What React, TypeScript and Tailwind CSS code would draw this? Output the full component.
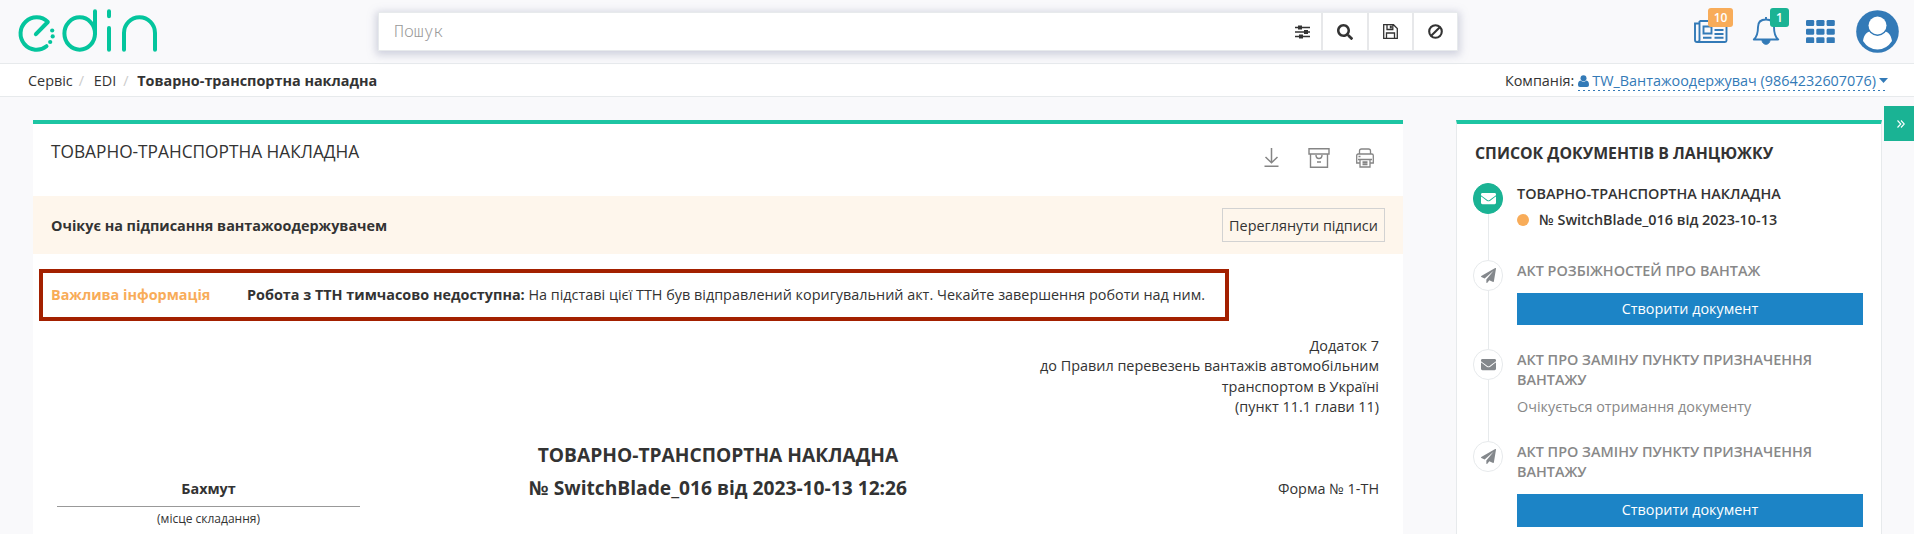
import React from "react";
import { FaEnvelope, FaSearch } from "react-icons/fa";

function Logo() {
  return (
    <svg width="142" height="46" viewBox="0 0 142 46" fill="none" stroke="#04c59d" strokeWidth="4" strokeLinecap="round" strokeLinejoin="round">
      <path d="M18.9 26.2 L30.8 14 A16 16.2 0 1 0 29.5 38.2" />
      <ellipse cx="62.7" cy="25.5" rx="15.3" ry="16.2" />
      <path d="M78 3.3 V25.5 M92 3.3 V8.2 M92 20 V41.7 M107 41.7 V25 A15.5 15.7 0 0 1 138 25 V41.7" />
      <g fill="#04c59d" stroke="none">
        <circle cx="35.2" cy="22.5" r="2.1" />
        <circle cx="35.7" cy="28.4" r="2.1" />
        <circle cx="33.2" cy="34" r="2.1" />
      </g>
    </svg>
  );
}

function SearchBar() {
  return (
    <div className="flex h-[39px] w-[1080px] items-stretch border border-[#e7eaec] bg-white text-[#333] shadow-[0_2px_8px_2px_rgba(130,135,165,0.35)]">
      <div className="flex flex-1 items-center pb-[2px] pl-[15px] font-['Noto_Sans_Mono','Roboto_Mono','Liberation_Mono',monospace] text-[16.5px] font-light text-[#999]">Пошук</div>
      <div className="flex w-[38px] items-center justify-center">
        <svg width="15" height="14" viewBox="0 0 15 14" stroke="#333" strokeWidth="1.3">
          <path d="M0 2.5H15M0 7H15M0 11.5H15" />
          <path d="M3 2.5H7M9 7H13M4 11.5H8" strokeWidth="4" />
        </svg>
      </div>
      <div className="flex w-[46px] items-center justify-center border-l-2 border-[#e7e8ea]"><FaSearch size={16} /></div>
      <div className="flex w-[45px] items-center justify-center border-l-2 border-[#e7e8ea]">
        <svg width="15" height="15" viewBox="0 0 15 15" fill="none" stroke="#333" strokeWidth="1.3">
          <path d="M.7 .7H10.5L14.3 4.5V14.3H.7ZM3.5 14.3V9H11.5V14.3M4 .7V5.5H9.8V.7" />
          <path d="M7.8 1.5V4.5" strokeWidth="2" />
        </svg>
      </div>
      <div className="flex w-[45px] items-center justify-center border-l-2 border-[#e7e8ea]">
        <svg width="15" height="15" viewBox="0 0 15 15" fill="none" stroke="#333" strokeWidth="2.1"><circle cx="7.5" cy="7.5" r="6.3" /><path d="M3.2 11.8L11.8 3.2" /></svg>
      </div>
    </div>
  );
}

function HeaderIcons() {
  return (
    <div className="flex text-[#337ab7]">
      <div className="relative h-[46px] w-[58px]">
        <svg className="mt-[12px]" width="34" height="24" viewBox="0 0 34 24" fill="none" stroke="currentColor" strokeWidth="1.9">
          <path d="M5.5 1H32.5V20.5Q32.5 22 31 22H3Q1 22 1 20V3.5H5.5M5.5 1V20Q5.5 22 3 22" />
          <path d="M9.5 6.5H17.5V13.5H9.5ZM20.5 6H29.5M20.5 10H29.5M20.5 14H29.5M9 17.8H17.5M20.5 17.8H29.5" />
        </svg>
        <span className="absolute left-[14px] top-0 flex h-[19px] w-[25px] items-center justify-center rounded-[3px] bg-[#f8ac59] text-[12px] font-semibold text-white">10</span>
      </div>
      <div className="relative h-[46px] w-[54px]">
        <svg className="mt-[8px]" width="28" height="29" viewBox="0 0 28 29" fill="none" stroke="currentColor" strokeWidth="1.9">
          <path d="M14 1V3M1.8 23.5C5.5 20.5 6 16 6 11Q6 3.5 14 3.5T22 11C22 16 22.5 20.5 26.2 23.5Z" strokeLinejoin="round" />
          <path d="M10 24A4 4.3 0 0 0 18 24Z" fill="currentColor" strokeWidth="1" />
        </svg>
        <span className="absolute left-[18px] top-0 flex h-[19px] w-[19px] items-center justify-center rounded-[3px] bg-[#1ab394] text-[12px] font-semibold text-white">1</span>
      </div>
      <svg className="mt-[12px] mr-[21px]" width="29" height="23" viewBox="0 0 29 23" fill="currentColor">
        {[0, 8.7, 17.2].map((y) => [0, 10.3, 20.6].map((x) => <rect key={`${x}-${y}`} x={x} y={y} width="8.2" height="6" rx="1.3" />))}
      </svg>
      <svg className="mt-[2px]" width="43" height="43" viewBox="0 0 43 43">
        <circle cx="21.5" cy="21.5" r="21.3" fill="currentColor" />
        <path d="M7 31C8 24.5 11 22 14 21.5Q21.5 29 29 21.5C32 22 35 24.5 36 31Q30.5 39.5 21.5 39.5T7 31Z" fill="#fff" />
        <circle cx="21.5" cy="15.5" r="10.4" fill="currentColor" />
        <circle cx="21.5" cy="15.5" r="9" fill="#fff" />
      </svg>
    </div>
  );
}

function DocumentIcons() {
  return (
    <div className="flex items-start text-[#858585]">
      <svg width="15" height="20" viewBox="0 0 15 20" fill="none" stroke="currentColor" strokeWidth="1.5"><path d="M7.5 0V14.5M1.5 9L7.5 14.7L13.5 9M.5 18.3H14.5" /></svg>
      <svg className="ml-[29px]" width="22" height="20" viewBox="0 0 22 20" fill="none" stroke="currentColor" strokeWidth="1.4"><path d="M1 .8H21V6H1ZM2.5 6V19.2H19.5V6M8 7Q8 10.5 11 10.5T14 7M9 14H13" /></svg>
      <svg className="ml-[26px]" width="18" height="20" viewBox="0 0 18 20" fill="none" stroke="currentColor" strokeWidth="1.3">
        <path d="M3.5 6V3Q3.5 1 5.5 1H12.5Q14.5 1 14.5 3V6M4 15H.7V7.5Q.7 6 2.2 6H15.8Q17.3 6 17.3 7.5V15H14M4 11.5H14V19H4ZM2 11.5H16M6.5 13.8H11.5M6.5 15.2H11.5M6.5 16.6H11.5M2.5 8.5H4.5" />
      </svg>
    </div>
  );
}

function PaperPlane() {
  return (
    <svg width="15" height="15" viewBox="0 0 1792 1792" fill="currentColor">
      <path d="M1764 11q33 24 27 64l-256 1536q-5 29-32 45-14 8-31 8-11 0-24-5l-453-185-242 295q-18 23-49 23-13 0-22-4-19-7-30.5-23.5t-11.5-36.5v-349l864-1059-1069 925-395-162q-37-14-40-55-2-40 32-59l1664-960q15-9 32-9 20 0 36 11z" />
    </svg>
  );
}

function CreateButton({ className }: { className: string }) {
  return <button className={`block w-[346px] bg-[#1c84c6] pb-px text-center text-white ${className}`}>Створити документ</button>;
}

function Step({ kind, active, last, className, children }: { kind: "mail" | "send"; active?: boolean; last?: boolean; className: string; children: React.ReactNode }) {
  return (
    <div className={`flex ${className}`}>
      <div className="mr-[14px] flex w-[30px] shrink-0 flex-col items-center">
        <div className={`flex h-[31px] w-[30px] shrink-0 items-center justify-center rounded-full border ${active ? "border-[#1ab394] bg-[#1ab394] text-white" : "border-[#e7eaec] bg-white text-[#84888c]"}`}>
          {kind === "mail" ? <FaEnvelope size={15} /> : <PaperPlane />}
        </div>
        {!last && <div className="ml-px w-px flex-1 bg-[#e7eaec]" />}
      </div>
      <div className="w-[346px] pt-px leading-[20px]">{children}</div>
    </div>
  );
}

export default function App() {
  return (
    <div className="h-[534px] w-full overflow-hidden bg-[#f9f9fb] font-['Open_Sans','Noto_Sans',sans-serif] text-[14.4px] leading-[20px] text-[#333]">
      <header className="flex h-[64px] items-start border-b border-[#e7eaec]">
        <div className="ml-[17px] mt-[8px] w-[361px]"><Logo /></div>
        <div className="mt-[12px]"><SearchBar /></div>
        <div className="ml-auto mr-[15px] mt-[8px]"><HeaderIcons /></div>
      </header>
      <nav className="flex h-[33px] items-center justify-between border-b border-[#e7eaec] bg-white pl-[28px] pr-[26px] pt-px">
        <div className="flex">
          <span>Сервіс</span>
          <span className="w-[21px] pl-[6px] text-[#ccc]">/</span>
          <span>EDI</span>
          <span className="w-[21px] pl-[7px] text-[#ccc]">/</span>
          <b>Товарно-транспортна накладна</b>
        </div>
        <div className="flex items-center">
          <span className="mr-[4px]">Компанія:</span>
          <span className="flex items-center bg-[repeating-linear-gradient(to_right,#337ab7_0_2px,transparent_2px_5px)] bg-[length:100%_1px] bg-bottom bg-no-repeat text-[#337ab7]">
            <svg className="mr-[3px]" width="11" height="12" viewBox="0 0 11 12" fill="currentColor"><circle cx="5.5" cy="3.2" r="3" /><path d="M0 10C0 7 1 6 2.6 5.6Q5.5 8 8.4 5.6C10 6 11 7 11 10Q11 12 9 12H2Q0 12 0 10Z" /></svg>
            TW_Вантажоодержувач (9864232607076)
            <svg className="ml-[3px]" width="9" height="5" viewBox="0 0 9 5" fill="currentColor"><path d="M0 0H9L4.5 5Z" /></svg>
          </span>
        </div>
      </nav>
      <div className="flex items-start">
        <main className="ml-[33px] mt-[23px] h-[414px] w-[1370px] border-t-4 border-[#1dc5a3] bg-white">
          <div className="flex h-[72px] items-start justify-between pl-[18px] pr-[29px]">
            <h1 className="pt-[18px] text-[17.28px] leading-[20px] font-medium">ТОВАРНО-ТРАНСПОРТНА НАКЛАДНА</h1>
            <div className="pt-[24px]"><DocumentIcons /></div>
          </div>
          <div className="flex h-[58px] items-center justify-between bg-[#fef6ec] px-[18px]">
            <b className="pt-px">Очікує на підписання вантажоодержувачем</b>
            <button className="h-[34px] w-[163px] border border-[#d2d2d2] pt-px">Переглянути підписи</button>
          </div>
          <div className="ml-[6px] mt-[15px] flex h-[52px] w-[1190px] items-center border-4 border-[#a32000] pl-[8px]">
            <b className="w-[196px] text-[#f8ac59]">Важлива інформація</b>
            <span><b>Робота з ТТН тимчасово недоступна:</b> На підставі цієї ТТН був відправлений коригувальний акт. Чекайте завершення роботи над ним.</span>
          </div>
          <div className="mt-[15px] h-[81px] pr-[24px] text-right leading-[20.3px]">
            <p>Додаток 7</p><p>до Правил перевезень вантажів автомобільним</p><p>транспортом в Україні</p><p>(пункт 11.1 глави 11)</p>
          </div>
          <div className="mt-[21px] flex justify-between pl-[24px] pr-[24px]">
            <div className="w-[303px] pt-[41px] text-center">
              <div className="h-[28px] border-b border-[#999]"><b>Бахмут</b></div>
              <div className="pt-[3px] text-[12px] leading-[18px]">(місце складання)</div>
            </div>
            <h2 className="w-[500px] text-center text-[19.2px] leading-[33px] font-bold">ТОВАРНО-ТРАНСПОРТНА НАКЛАДНА<br />№ SwitchBlade_016 від 2023-10-13 12:26</h2>
            <div className="w-[303px] pt-[41px] text-right">Форма № 1-ТН</div>
          </div>
        </main>
        <aside className="ml-[53px] mt-[23px] h-[450px] w-[426px] border border-t-4 border-[#e7eaec] border-t-[#1dc5a3] bg-white pl-[16px]">
          <h2 className="mt-[19px] pl-[2px] text-[15.84px] leading-[20px] font-bold">СПИСОК ДОКУМЕНТІВ В ЛАНЦЮЖКУ</h2>
          <Step kind="mail" active className="mt-[20px] h-[77px]">
            <p className="font-semibold">ТОВАРНО-ТРАНСПОРТНА НАКЛАДНА</p>
            <p className="mt-[6px] flex items-center font-semibold"><span className="mr-[10px] h-[12px] w-[12px] rounded-full bg-[#f8ac59]" />№ SwitchBlade_016 від 2023-10-13</p>
          </Step>
          <Step kind="send" className="h-[89px]">
            <p className="font-semibold text-[#888]">АКТ РОЗБІЖНОСТЕЙ ПРО ВАНТАЖ</p>
            <CreateButton className="mt-[12px] h-[32px]" />
          </Step>
          <Step kind="mail" className="h-[92px]">
            <p className="font-semibold text-[#888]">АКТ ПРО ЗАМІНУ ПУНКТУ ПРИЗНАЧЕННЯ ВАНТАЖУ</p>
            <p className="mt-[7px] text-[#888]">Очікується отримання документу</p>
          </Step>
          <Step kind="send" last className="h-[92px]">
            <p className="font-semibold text-[#888]">АКТ ПРО ЗАМІНУ ПУНКТУ ПРИЗНАЧЕННЯ ВАНТАЖУ</p>
            <CreateButton className="mt-[12px] h-[33px]" />
          </Step>
        </aside>
        <button className="ml-auto mt-[9px] flex h-[35px] w-[30px] items-center justify-center bg-[#1ab394] pl-[3px]">
          <svg width="8" height="8" viewBox="0 0 8 8" fill="none" stroke="#fff" strokeWidth="1.1"><path d="M.5 .5L3.8 4L.5 7.5M4 .5L7.3 4L4 7.5" /></svg>
        </button>
      </div>
    </div>
  );
}
